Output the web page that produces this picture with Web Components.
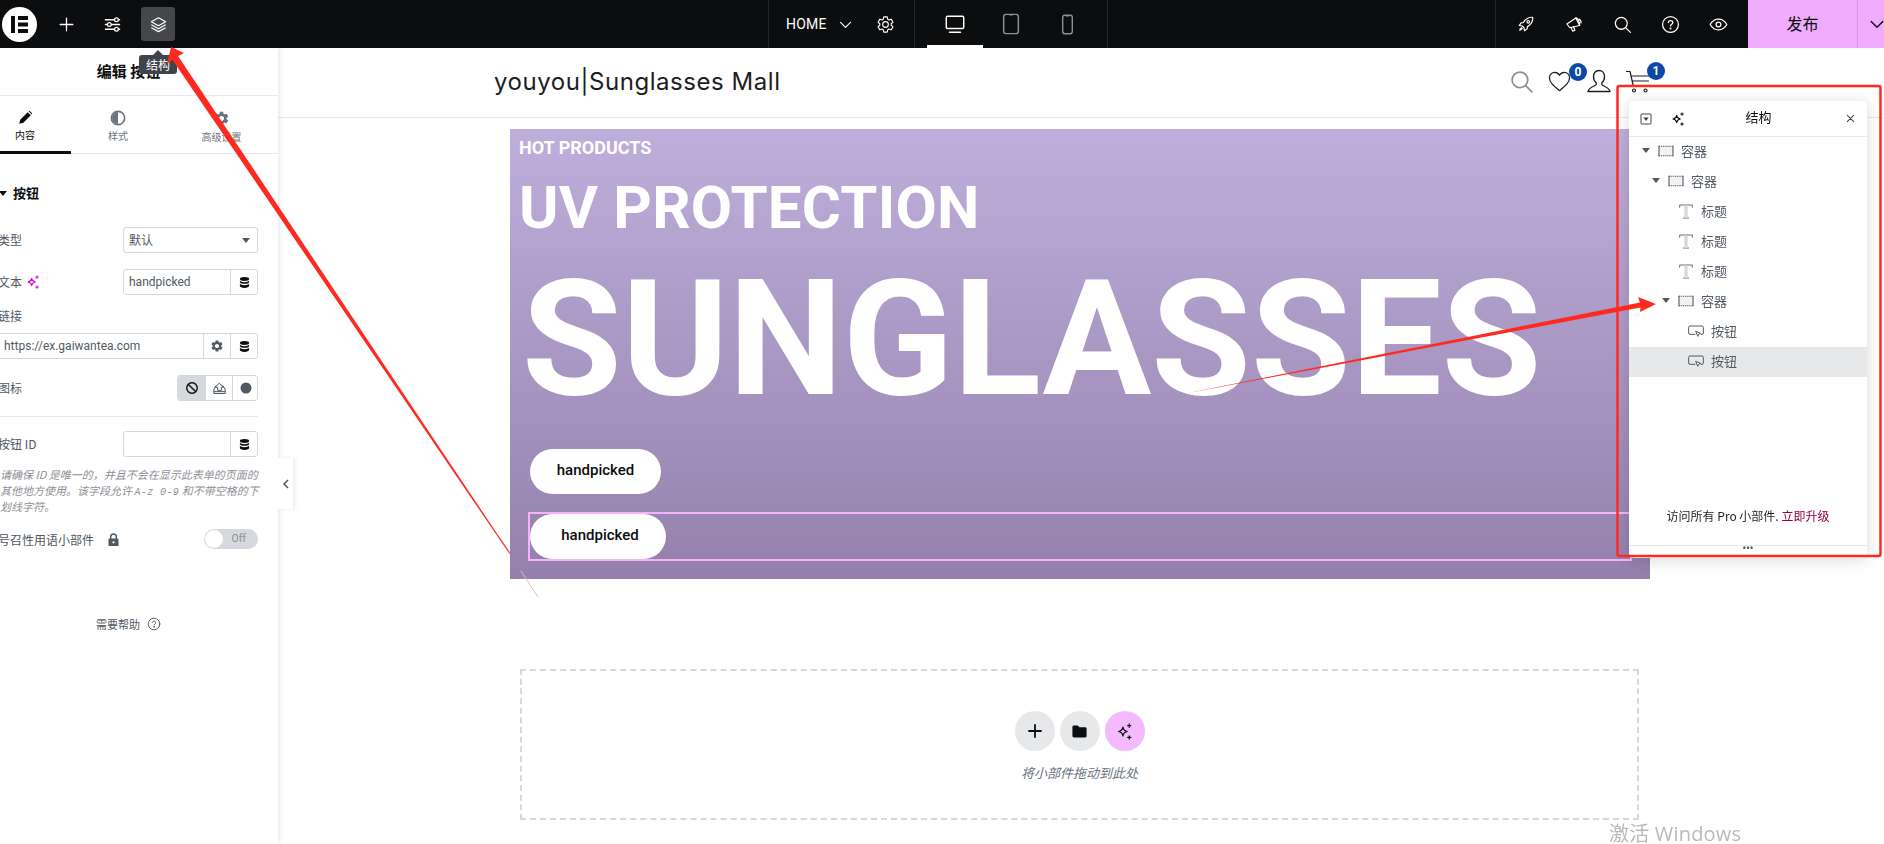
<!DOCTYPE html>
<html lang="zh">
<head>
<meta charset="utf-8">
<title>Editor</title>
<style>
    html, body { margin: 0; height: 100%; overflow: hidden; background: #fff; }
    body { font-family: Roboto, "Noto Sans CJK SC", sans-serif; }
    #app { display: flex; flex-direction: column; height: 844px; width: 1884px; }
    #main { display: flex; flex: 1; min-height: 0; }
</style>
</head>
<body>
<div id="app">
    <top-bar></top-bar>
    <div id="main">
        <side-panel>
            <ctrl-row label="类型" style="margin-top:24px"><ctrl-select value="默认"></ctrl-select></ctrl-row>
            <ctrl-row label="文本" sparkle style="margin-top:16px"><ctrl-input value="handpicked" width="135"></ctrl-input></ctrl-row>
            <ctrl-row label="链接" stacked style="margin-top:11px"><ctrl-input value="https://ex.gaiwantea.com" width="262" gear></ctrl-input></ctrl-row>
            <ctrl-row label="图标" style="margin-top:16px"><ctrl-choices></ctrl-choices></ctrl-row>
            <ctrl-row label="按钮 ID" divided style="margin-top:15px"><ctrl-input value="" width="135"></ctrl-input></ctrl-row>
        </side-panel>
        <site-canvas>
            <site-header></site-header>
            <hero-section>
                <pill-button>handpicked</pill-button>
                <pill-button selected>handpicked</pill-button>
            </hero-section>
            <drop-zone></drop-zone>
        </site-canvas>
    </div>
</div>
<structure-panel>
    <tree-row level="0" type="box" caret>容器</tree-row>
    <tree-row level="1" type="box" caret>容器</tree-row>
    <tree-row level="3" type="title">标题</tree-row>
    <tree-row level="3" type="title">标题</tree-row>
    <tree-row level="3" type="title">标题</tree-row>
    <tree-row level="2" type="box" caret>容器</tree-row>
    <tree-row level="4" type="button">按钮</tree-row>
    <tree-row level="4" type="button" active>按钮</tree-row>
</structure-panel>
<note-layer></note-layer>

<script>
const GEAR = 'M19.14 12.94c.04-.3.06-.61.06-.94 0-.32-.02-.64-.07-.94l2.03-1.58a.49.49 0 0 0 .12-.61l-1.92-3.32a.488.488 0 0 0-.59-.22l-2.39.96c-.5-.38-1.03-.7-1.62-.94l-.36-2.54a.484.484 0 0 0-.48-.41h-3.84c-.24 0-.43.17-.47.41l-.36 2.54c-.59.24-1.13.57-1.62.94l-2.39-.96c-.22-.08-.47 0-.59.22L2.74 8.87c-.12.21-.08.47.12.61l2.03 1.58c-.05.3-.09.63-.09.94s.02.64.07.94l-2.03 1.58a.49.49 0 0 0-.12.61l1.92 3.32c.12.22.37.29.59.22l2.39-.96c.5.38 1.03.7 1.62.94l.36 2.54c.05.24.24.41.48.41h3.84c.24 0 .44-.17.47-.41l.36-2.54c.59-.24 1.13-.56 1.62-.94l2.39.96c.22.08.47 0 .59-.22l1.92-3.32c.12-.22.07-.47-.12-.61l-2.01-1.58zM12 15.6c-1.98 0-3.6-1.62-3.6-3.6s1.62-3.6 3.6-3.6 3.6 1.62 3.6 3.6-1.62 3.6-3.6 3.6z';

const svg = (size, body, width = 1.6) =>
    `<svg width="${size}" height="${size}" viewBox="0 0 24 24" fill="none" stroke="currentColor" stroke-width="${width}" stroke-linecap="round" stroke-linejoin="round" style="display:block;flex:none">${body}</svg>`;

const ICONS = {
    plus: (s, w) => svg(s, '<path d="M12 4v16M4 12h16"/>', w),
    sliders: s => svg(s, '<path d="M3 6h11M20 6h1M3 12h2M11 12h10M3 18h11M20 18h1"/><circle cx="17" cy="6" r="2.4"/><circle cx="8" cy="12" r="2.4"/><circle cx="17" cy="18" r="2.4"/>'),
    layers: s => svg(s, '<path d="M12 3.5 21 8.5 12 13.5 3 8.500z"/><path d="M3.500 12.600 12 17.400 20.500 12.600"/><path d="M3.500 16.400 12 21 20.500 16.400"/>'),
    chevron: s => svg(s, '<path d="M5 9l7 7 7-7"/>'),
    gear: s => svg(s, `<path d="${GEAR}"/>`, 1.4),
    gearSolid: s => `<svg width="${s}" height="${s}" viewBox="0 0 24 24" style="display:block;flex:none" fill="currentColor"><path d="${GEAR}"/></svg>`,
    desktop: s => svg(s, '<rect x="2.500" y="3.500" width="19" height="13.500" rx="1.500"/><path d="M6 21h12"/>'),
    tablet: s => svg(s, '<rect x="4" y="1.500" width="16" height="21" rx="2.500"/><path d="M10.500 2h3"/>'),
    phone: s => svg(s, '<rect x="6.500" y="1.500" width="11" height="21" rx="2.500"/><path d="M10.500 2h3"/>'),
    rocket: s => svg(s, '<path d="M21 3c-5.500-.3-9.500 2-12.500 7l-3 .5L3 14l4 .7 2.300 2.300.7 4 3.500-2.500.5-3c5-3 7.300-7 7-12.500z"/><circle cx="15" cy="9" r="1.700"/><path d="M6 17c-1.400.6-2 1.700-2.300 3.300 1.600-.3 2.700-.9 3.300-2.300"/>'),
    megaphone: s => svg(s, '<path d="M2.500 12 14.500 4l5 10-13 3z"/><path d="M14.500 4c1.800-1 5.500 5.500 5 10"/><path d="M8 16.500l2.200 5 3-1.200-2-5"/><path d="M18.500 5.500c1.800.8 3 3 2.800 5"/>'),
    search: s => svg(s, '<circle cx="10.500" cy="10.500" r="7.500"/><path d="M16 16l6 6"/>'),
    help: s => svg(s, '<circle cx="12" cy="12" r="10"/><path d="M9.300 9.400c.2-1.500 1.300-2.400 2.800-2.400 1.600 0 2.800 1 2.800 2.400 0 2.300-2.900 2.300-2.900 4.600"/><circle cx="12" cy="17" r=".5"/>'),
    eye: s => svg(s, '<path d="M1.500 12C4 7.500 7.700 5.300 12 5.300s8 2.200 10.500 6.700C20 16.500 16.300 18.700 12 18.700S4 16.500 1.500 12z"/><circle cx="12" cy="12" r="3"/>'),
    sparkle: s => svg(s, '<path d="M10 6.500c.6 3.400 2.100 4.900 5.500 5.500-3.400.6-4.900 2.100-5.500 5.500-.6-3.400-2.100-4.900-5.500-5.500 3.400-.6 4.900-2.100 5.500-5.500z"/><path d="M18 2.500v4M16 4.500h4M18 17.500v4M16 19.500h4"/>'),
    db: s => `<svg width="${s}" height="${s}" viewBox="0 0 24 24" style="display:block" fill="currentColor"><ellipse cx="12" cy="5.500" rx="8.500" ry="3.500"/><path d="M3.500 8.500c1 2 4.500 3 8.500 3s7.500-1 8.500-3v3c-1 2-4.500 3-8.500 3s-7.500-1-8.500-3z"/><path d="M3.500 14c1 2 4.500 3 8.500 3s7.500-1 8.500-3v4.500c0 2-3.800 3.500-8.500 3.500s-8.500-1.500-8.500-3.500z"/></svg>`,
    block: s => svg(s, '<circle cx="12" cy="12" r="9"/><path d="M5.800 5.800l12.400 12.400"/>', 2.4),
    upload: s => svg(s, '<path d="M12 4l6.500 6H15v5H9v-5H5.500z"/><path d="M6.500 7.500 3 13v7h18v-7l-3.500-5.500"/><path d="M3 17h18"/>'),
    dot: s => `<svg width="${s}" height="${s}" viewBox="0 0 24 24" style="display:block"><circle cx="12" cy="12" r="11" fill="currentColor"/></svg>`,
    pencil: s => `<svg width="${s}" height="${s}" viewBox="0 0 24 24" style="display:block;flex:none" fill="currentColor"><path d="M2 22l1.500-6.500L15.500 3.500l5 5L8.500 20.500z"/><path d="M17 2l1.500-.8 4.300 4.300L22 7z"/></svg>`,
    half: s => `<svg width="${s}" height="${s}" viewBox="0 0 24 24" style="display:block;flex:none"><circle cx="12" cy="12" r="10" fill="none" stroke="currentColor" stroke-width="2.400"/><path d="M12 3a9 9 0 0 0 0 18z" fill="currentColor"/></svg>`,
    lock: s => `<svg width="${s}" height="${s}" viewBox="0 0 24 24" style="display:block"><path d="M7.500 11V7.500a4.500 4.500 0 0 1 9 0V11" fill="none" stroke="currentColor" stroke-width="2.400"/><rect x="4" y="10.500" width="16" height="12" rx="1.500" fill="currentColor"/><circle cx="12" cy="16.500" r="1.800" fill="#fff"/></svg>`,
    heart: s => svg(s, '<path d="M12 21.500C6 16.500 1.500 13 1.500 8 1.500 4.800 4 2.500 7 2.500c2.200 0 4 1.200 5 3 1-1.800 2.800-3 5-3 3 0 5.500 2.300 5.500 5.500 0 5-4.500 8.500-10.500 13.500z"/>', 1.3),
    user: s => svg(s, '<path d="M12 1.500c-3.500 0-5.500 2.700-5.500 6 0 2.800 1 5 2.700 6.300v1.700c0 1.300-7.700 2.500-8.200 7h22c-.5-4.500-8.200-5.700-8.200-7v-1.700c1.700-1.300 2.700-3.500 2.700-6.300 0-3.300-2-6-5.500-6z"/>', 1.3),
    cart: s => svg(s, '<path d="M.500 2.500h3.500l3.500 15h15M5 7h18M6 12h16.500"/><circle cx="8" cy="21.500" r="1.500"/><circle cx="19.500" cy="21.500" r="1.500"/>', 1.2),
    folder: s => `<svg width="${s}" height="${s}" viewBox="0 0 24 24" style="display:block" fill="currentColor"><path d="M2 5.500C2 4.400 2.900 3.500 4 3.500h5.500l2.500 2.500h8c1.100 0 2 .9 2 2v10.500c0 1.100-.9 2-2 2H4c-1.100 0-2-.9-2-2z"/></svg>`,
    close: s => svg(s, '<path d="M5 5l14 14M19 5 5 19"/>', 2.2),
    collapse: s => `<svg width="${s}" height="${s}" viewBox="0 0 24 24" style="display:block"><rect x="2" y="2" width="20" height="20" rx="1.500" fill="none" stroke="currentColor" stroke-width="2"/><path d="M6.500 9h11L12 16z" fill="currentColor"/></svg>`,
    box: s => `<svg width="${s}" height="${s}" viewBox="0 0 24 24" style="display:block"><rect x="1" y="5" width="22" height="14" fill="#f1f2f3"/><path d="M1 5h22M1 19h22" stroke="#515962" stroke-width="1.600" stroke-dasharray="2 1.200"/><path d="M1.500 4v16M22.500 4v16" stroke="#515962" stroke-width="1.600"/></svg>`,
    title: s => `<svg width="${s}" height="${s}" viewBox="0 0 24 24" style="display:block" fill="none" stroke="#515962" stroke-width="1.300"><path d="M2.500 7V3h19v4"/><path d="M7.500 22.500h9"/><path d="M9.500 3.500h5v19h-5z" fill="#d5d8dc" stroke="none"/></svg>`,
    widgetBtn: s => `<svg width="${s}" height="${s}" viewBox="0 0 24 24" style="display:block" fill="none" stroke="currentColor" stroke-width="1.500"><path d="M11 17H3a2 2 0 0 1-2-2V6.500a2 2 0 0 1 2-2h18a2 2 0 0 1 2 2V15a2 2 0 0 1-2 2h-2"/><path d="M11.500 12.500l7.500 3-3 1.300-1.300 3.200z" fill="#fff"/></svg>`
};

class TopBar extends HTMLElement {
    connectedCallback() {
        this.attachShadow({ mode: 'open' });
        this.shadowRoot.innerHTML = `
        <style>
            :host { display: flex; height: 48px; background: #0c0d0e; color: #fff; flex: none; position: relative; z-index: 5; }
            .logo { width: 35px; height: 35px; margin: 7px 0 0 2px; border-radius: 50%; background: #fff; display: flex; align-items: center; justify-content: center; }
            .btn { width: 34px; height: 34px; margin: 7px 0 0 12px; display: flex; align-items: center; justify-content: center; border-radius: 3px; }
            .btn.on { background: #45474a; }
            .left { display: flex; width: 768px; flex: none; }
            .page { width: 147px; flex: none; box-sizing: border-box; display: flex; align-items: center; border-left: 1px solid #26282b; border-right: 1px solid #26282b; }
            .page b { font: 400 14px Roboto, sans-serif; letter-spacing: .2px; margin-left: 17px; }
            .devices { width: 193px; flex: none; box-sizing: border-box; display: flex; border-right: 1px solid #26282b; }
            .dev { width: 56px; display: flex; align-items: center; justify-content: center; color: #8d9096; height: 48px; box-sizing: border-box; }
            .dev.on { color: #fff; border-bottom: 3px solid #fff; padding-top: 3px; }
            .mid { flex: 1; border-right: 1px solid #26282b; }
            .tools { width: 252px; flex: none; display: flex; align-items: center; box-sizing: border-box; padding-left: 6px; }
            .t { width: 48px; display: flex; justify-content: center; }
            .publish { width: 109px; flex: none; box-sizing: border-box; padding-bottom: 3px; background: #f0abfc; color: #0c0d0e; display: flex; align-items: center; justify-content: center; font: 16px "Noto Sans CJK SC", sans-serif; }
            .more { width: 27px; flex: none; box-sizing: border-box; background: #f0abfc; border-left: 1px solid #dd94e8; color: #0c0d0e; display: flex; align-items: center; padding-left: 9px; overflow: hidden; }
            .tip { position: absolute; left: 139px; top: 55px; width: 38px; height: 19px; background: #3f444b; color: #fff; border-radius: 3px; font: 12px/19px "Noto Sans CJK SC", sans-serif; text-align: center; }
            .tip::before { content: ""; position: absolute; left: 14px; top: -5px; border: 5px solid transparent; border-top: 0; border-bottom-color: #3f444b; }
        </style>
        <div class="left">
            <div class="logo"><svg width="19" height="19" viewBox="0 0 19 19"><path fill="#0c0d0e" d="M1 1h4v17H1zM8 1h10v4H8zM8 7.500h10v4H8zM8 14h10v4H8z"/></svg></div>
            <div class="btn">${ICONS.plus(19)}</div>
            <div class="btn">${ICONS.sliders(19)}</div>
            <div class="btn on">${ICONS.layers(19)}</div>
        </div>
        <div class="page"><b>HOME</b><span style="margin-left:10px">${ICONS.chevron(17)}</span><span style="margin-left:22px">${ICONS.gear(19)}</span></div>
        <div class="devices">
            <div class="dev on" style="margin-left:12px">${ICONS.desktop(22)}</div>
            <div class="dev">${ICONS.tablet(22)}</div>
            <div class="dev">${ICONS.phone(21)}</div>
        </div>
        <div class="mid"></div>
        <div class="tools">
            <span class="t">${ICONS.rocket(18)}</span><span class="t">${ICONS.megaphone(18)}</span><span class="t">${ICONS.search(19)}</span><span class="t">${ICONS.help(19)}</span><span class="t">${ICONS.eye(19)}</span>
        </div>
        <div class="publish">发布</div>
        <div class="more">${ICONS.chevron(20)}</div>
        <div class="tip">结构</div>`;
    }
}

class SidePanel extends HTMLElement {
    connectedCallback() {
        this.attachShadow({ mode: 'open' });
        this.shadowRoot.innerHTML = `
        <style>
            :host { display: block; width: 278px; flex: none; background: #fff; box-shadow: 1px 0 5px rgba(0,0,0,.12); position: relative; z-index: 2; font-family: "Noto Sans CJK SC", sans-serif; }
            .head { height: 47px; border-bottom: 1px solid #e6e8ea; text-align: center; font: 700 15px/45px "Noto Sans CJK SC", sans-serif; color: #0c0d0e; padding-right: 21px; }
            .tabs { display: flex; height: 57px; border-bottom: 1px solid #e6e8ea; margin-left: -21px; font-size: 10px; color: #69727d; }
            .tab { display: flex; flex-direction: column; align-items: center; padding-top: 14px; box-sizing: border-box; gap: 2px; line-height: 16px; }
            .tab.on { color: #0c0d0e; box-shadow: inset 0 -3px 0 #0c0d0e; height: 58px; }
            .body { margin-left: -4px; width: 262px; }
            .sec { display: flex; align-items: center; font: 700 13px/20px "Noto Sans CJK SC", sans-serif; color: #0c0d0e; margin-top: 29px; }
            .sec i { width: 0; height: 0; border: 4px solid transparent; border-top: 5px solid #0c0d0e; border-bottom: 0; margin: 0 6px 0 3px; }
            .note { font: italic 11px/16px "Noto Sans CJK SC", sans-serif; color: #8d9096; margin: 9px 0 0 4px; white-space: nowrap; }
            .note code { font: italic 10px "Liberation Mono", monospace; letter-spacing: .4px; }
            .cta { display: flex; align-items: center; height: 20px; margin-top: 15px; font-size: 12px; color: #515962; padding-left: 2px; }
            .cta .lock { margin-left: 12px; color: #515962; }
            .tog { margin-left: auto; width: 54px; height: 20px; border-radius: 10px; background: #d5d8dc; position: relative; font: 10.500px/19px Roboto, sans-serif; color: #8d9096; text-align: right; padding-right: 12px; box-sizing: border-box; }
            .tog::before { content: ""; position: absolute; left: 1px; top: 1px; width: 18px; height: 18px; border-radius: 50%; background: #fff; }
            .help { display: flex; justify-content: center; align-items: center; gap: 7px; font-size: 11px; color: #515962; margin: 65px 0 0 3px; height: 20px; }
            .handle { position: absolute; left: 278px; top: 410px; width: 15px; height: 51px; background: #fff; box-shadow: 2px 0 4px rgba(0,0,0,.08); display: flex; align-items: center; justify-content: center; color: #515962; }
        </style>
        <div class="head">编辑 按钮</div>
        <div class="tabs">
            <div class="tab on" style="width:92px">${ICONS.pencil(15)}内容</div>
            <div class="tab" style="width:94px">${ICONS.half(16)}样式</div>
            <div class="tab" style="width:113px">${ICONS.gearSolid(17)}高级设置</div>
        </div>
        <div class="body">
            <div class="sec"><i></i>按钮</div>
            <slot></slot>
            <div class="note">请确保 ID 是唯一的，并且不会在显示此表单的页面的<br>其他地方使用。该字段允许 <code>A-z 0-9</code> 和不带空格的下<br>划线字符。</div>
            <div class="cta">号召性用语小部件<span class="lock">${ICONS.lock(15)}</span><span class="tog">Off</span></div>
            <div class="help">需要帮助 ${ICONS.help(14)}</div>
        </div>
        <div class="handle"><svg width="8" height="10" viewBox="0 0 8 10" fill="none" stroke="currentColor" stroke-width="1.600"><path d="M6 1 2 5l4 4"/></svg></div>`;
    }
}

class CtrlRow extends HTMLElement {
    connectedCallback() {
        const stacked = this.hasAttribute('stacked');
        const label = this.getAttribute('label');
        this.attachShadow({ mode: 'open' });
        this.shadowRoot.innerHTML = `
        <style>
            :host { display: block; font: 12px "Noto Sans CJK SC", Roboto, sans-serif; color: #515962; }
            .row { display: flex; align-items: ${stacked ? 'flex-start' : 'center'}; flex-direction: ${stacked ? 'column' : 'row'}; justify-content: space-between; gap: ${stacked ? '7px' : '0'}; }
            .lbl { display: flex; align-items: center; gap: 3px; line-height: 20px; padding-left: 2px; }
            .spark { color: #d004d4; }
            hr { border: 0; border-top: 1px solid #e6e8ea; margin: 0 0 14px; }
        </style>
        ${this.hasAttribute('divided') ? '<hr>' : ''}
        <div class="row">
            <span class="lbl">${label}${this.hasAttribute('sparkle') ? `<span class="spark">${ICONS.sparkle(16)}</span>` : ''}</span>
            <slot></slot>
        </div>`;
    }
}

const FIELD_CSS = `
    :host { display: flex; height: 26px; box-sizing: border-box; border: 1px solid #d5d8dc; border-radius: 3px; background: #fff; font: 12px/24px Roboto, sans-serif; color: #515962; overflow: hidden; }
    .val { flex: 1; padding-left: 5px; white-space: nowrap; }
    .cell { width: 27px; display: flex; align-items: center; justify-content: center; border-left: 1px solid #d5d8dc; color: #0c0d0e; flex: none; box-sizing: border-box; }
`;

class CtrlSelect extends HTMLElement {
    connectedCallback() {
        this.attachShadow({ mode: 'open' });
        this.shadowRoot.innerHTML = `
        <style>${FIELD_CSS}
            :host { width: 135px; font-family: "Noto Sans CJK SC", sans-serif; }
            i { width: 0; height: 0; border: 4px solid transparent; border-top: 5px solid #515962; border-bottom: 0; align-self: center; margin-right: 7px; }
        </style>
        <span class="val">${this.getAttribute('value')}</span><i></i>`;
    }
}

class CtrlInput extends HTMLElement {
    connectedCallback() {
        this.attachShadow({ mode: 'open' });
        this.shadowRoot.innerHTML = `
        <style>${FIELD_CSS}
            :host { width: ${this.getAttribute('width')}px; }
            :host([gear]) .val { padding-left: 7px; }
        </style>
        <span class="val">${this.getAttribute('value')}</span>
        ${this.hasAttribute('gear') ? `<span class="cell" style="color:#515962">${ICONS.gearSolid(14)}</span>` : ''}
        <span class="cell">${ICONS.db(13)}</span>`;
    }
}

class CtrlChoices extends HTMLElement {
    connectedCallback() {
        this.attachShadow({ mode: 'open' });
        this.shadowRoot.innerHTML = `
        <style>${FIELD_CSS}
            :host { width: 81px; }
            .cell { color: #515962; }
            .cell.on { border-left: 0; background: #d5d8dc; color: #0c0d0e; }
        </style>
        <span class="cell on">${ICONS.block(14)}</span>
        <span class="cell">${ICONS.upload(15)}</span>
        <span class="cell">${ICONS.dot(12)}</span>`;
    }
}

class SiteCanvas extends HTMLElement {
    connectedCallback() {
        this.attachShadow({ mode: 'open' });
        this.shadowRoot.innerHTML = `
        <style>:host { display: block; flex: 1; min-width: 0; background: #fff; }</style>
        <slot></slot>`;
    }
}

class SiteHeader extends HTMLElement {
    connectedCallback() {
        this.attachShadow({ mode: 'open' });
        this.shadowRoot.innerHTML = `
        <style>
            :host { display: flex; align-items: center; height: 70px; box-sizing: border-box; border-bottom: 1px solid #e6e8ea; padding-left: 216px; color: #1d1d1f; }
            .name { font: 400 24px Inter, sans-serif; letter-spacing: .55px; margin-top: -2px; }
            .icons { display: flex; align-items: center; margin-left: auto; margin-right: 234px; margin-top: -3px; }
            .ic { position: relative; display: block; }
            .badge { position: absolute; width: 18px; height: 18px; border-radius: 50%; background: #0d47a8; color: #fff; font: 700 12px/18px Roboto, sans-serif; text-align: center; top: -7px; }
        </style>
        <span class="name">youyou|Sunglasses Mall</span>
        <div class="icons">
            <span class="ic" style="color:#8d8d8d;margin-right:14px">${ICONS.search(25)}</span>
            <span class="ic" style="margin-right:16px">${ICONS.heart(23)}<span class="badge" style="left:21px">0</span></span>
            <span class="ic" style="margin-right:15px">${ICONS.user(24)}</span>
            <span class="ic">${ICONS.cart(24)}<span class="badge" style="left:21px">1</span></span>
        </div>`;
    }
}

class HeroSection extends HTMLElement {
    connectedCallback() {
        this.attachShadow({ mode: 'open' });
        this.shadowRoot.innerHTML = `
        <style>
            :host { display: block; margin: 11px 0 0 232px; width: 1140px; height: 450px; box-sizing: border-box; padding: 8px 9px 0; background: linear-gradient(#bfaedb, #9480ab); color: #fff; font-family: Roboto, sans-serif; }
            .hot { font: 700 18px/22px Roboto, sans-serif; }
            .uv { font: 700 60px/70px Roboto, sans-serif; margin-top: 14px; letter-spacing: .2px; }
            .big { font: 700 162px/170px Roboto, sans-serif; margin: 11px 0 0 3px; white-space: nowrap; }
            .btns { display: flex; flex-direction: column; margin-top: 25px; }
        </style>
        <div class="hot">HOT PRODUCTS</div>
        <div class="uv">UV PROTECTION</div>
        <div class="big">SUNGLASSES</div>
        <div class="btns"><slot></slot></div>`;
    }
}

class PillButton extends HTMLElement {
    connectedCallback() {
        const selected = this.hasAttribute('selected');
        this.attachShadow({ mode: 'open' });
        this.shadowRoot.innerHTML = `
        <style>
            :host { display: block; margin: ${selected ? '18px 0 0 9px' : '0 0 0 11px'}; ${selected ? 'width: 1104px; height: 49px; box-sizing: border-box; border: 2px solid #f3b4fb; ' : ''} }
            a { display: block; box-sizing: border-box; width: ${selected ? 136 : 131}px; padding-left: ${selected ? 4 : 0}px; height: 45px; border-radius: 23px; background: #fff; color: #0c0d0e; text-align: center; font: 500 15px/43px Roboto, sans-serif; }
        </style>
        <a><slot></slot></a>`;
    }
}

class DropZone extends HTMLElement {
    connectedCallback() {
        this.attachShadow({ mode: 'open' });
        this.shadowRoot.innerHTML = `
        <style>
            :host { display: flex; flex-direction: column; align-items: center; margin: 90px 0 0 242px; width: 1119px; height: 151px; box-sizing: border-box; border: 2px dashed #d5d8dc; padding-top: 40px; }
            .row { display: flex; gap: 5px; }
            .c { width: 40px; height: 40px; border-radius: 50%; background: #e6e8ea; color: #0c0d0e; display: flex; align-items: center; justify-content: center; }
            .c.ai { background: #f3bafd; }
            p { margin: 12px 0 0; font: italic 13px/20px "Noto Sans CJK SC", sans-serif; color: #69727d; }
        </style>
        <div class="row">
            <div class="c">${ICONS.plus(18, 2.4)}</div>
            <div class="c">${ICONS.folder(17)}</div>
            <div class="c ai">${ICONS.sparkle(19)}</div>
        </div>
        <p>将小部件拖动到此处</p>`;
    }
}

class StructurePanel extends HTMLElement {
    connectedCallback() {
        this.attachShadow({ mode: 'open' });
        this.shadowRoot.innerHTML = `
        <style>
            :host { position: fixed; left: 1629px; top: 101px; width: 238px; height: 457px; background: #fff; border-radius: 5px; box-shadow: 0 2px 15px rgba(0,0,0,.15); display: flex; flex-direction: column; z-index: 6; font-family: "Noto Sans CJK SC", sans-serif; }
            .head { display: flex; align-items: center; height: 35px; flex: none; border-bottom: 1px solid #e6e8ea; color: #3f444b; font-size: 13px; position: relative; }
            .head .title { position: absolute; left: 0; right: 0; text-align: center; color: #0c0d0e; padding-left: 21px; box-sizing: border-box; top: 6px; line-height: 20px; }
            .list { flex: 1; }
            .foot { height: 44px; flex: none; text-align: center; font-size: 12px; line-height: 30px; color: #1f2124; box-sizing: border-box; position: relative; }
            .foot em { font-style: normal; color: #93003f; }
            .grip { height: 13px; flex: none; border-top: 1px solid #e6e8ea; text-align: center; font: 700 10px/6px Roboto, sans-serif; color: #515962; box-sizing: border-box; }
        </style>
        <div class="head">
            <span style="margin-left:11px">${ICONS.collapse(12)}</span>
            <span style="margin-left:18px;color:#0c0d0e">${ICONS.sparkle(16)}</span>
            <span class="title">结构</span>
            <span style="margin-left:auto;margin-right:11px">${ICONS.close(11)}</span>
        </div>
        <div class="list"><slot></slot></div>
        <div class="foot">访问所有 Pro 小部件. <em>立即升级</em></div>
        <div class="grip">•••</div>`;
    }
}

class TreeRow extends HTMLElement {
    connectedCallback() {
        const level = +this.getAttribute('level');
        const type = this.getAttribute('type');
        const caret = this.hasAttribute('caret');
        this.attachShadow({ mode: 'open' });
        this.shadowRoot.innerHTML = `
        <style>
            :host { display: flex; align-items: center; height: 30px; box-sizing: border-box; padding-bottom: 3px; color: #515962; font-size: 13px; padding-left: ${(caret ? 13 : 19) + level * 10}px; ${this.hasAttribute('active') ? 'background: #e6e8ea;' : ''} }
            i { width: 0; height: 0; border: 4px solid transparent; border-top: 5px solid #515962; border-bottom: 0; margin-right: 8px; flex: none; }
            .ic { width: 16px; margin-right: 7px; flex: none; }
        </style>
        ${caret ? '<i></i>' : ''}
        <span class="ic">${ICONS[type === 'button' ? 'widgetBtn' : type](16)}</span>
        <slot></slot>`;
    }
}

class NoteLayer extends HTMLElement {
    connectedCallback() {
        this.attachShadow({ mode: 'open' });
        this.shadowRoot.innerHTML = `
        <style>
            :host { position: fixed; left: 0; top: 0; width: 1884px; height: 844px; pointer-events: none; z-index: 10; }
            svg { position: absolute; left: 0; top: 0; }
            .mark { position: absolute; left: 1609px; top: 823px; font: 20px "Open Sans", "Noto Sans CJK SC", sans-serif; color: #b9b9b9; line-height: 21px; white-space: nowrap; letter-spacing: .2px; }
        </style>
        <svg width="1884" height="844" viewBox="0 0 1884 844">
            <rect x="1617.500" y="86" width="263" height="470" rx="2" fill="none" stroke="#ff2a1f" stroke-width="2.500"/>
            <path fill="#ff2a1f" d="M171 47 184 53 178 56 510 553 509.500 554 172.500 60 167 64z"/>
            <path d="M500 538 510 553" stroke="#e56a60" stroke-width="1"/>
            <path d="M521 571 538 597" stroke="#f2b5ae" stroke-width="1"/>
            <path fill="#ff2a1f" d="M1656 304 1640 312 1640.500 307.500 1183 394 1640 302.500 1638 297z"/>
        </svg>
        <span class="mark">激活 Windows</span>`;
    }
}

customElements.define('top-bar', TopBar);
customElements.define('side-panel', SidePanel);
customElements.define('ctrl-row', CtrlRow);
customElements.define('ctrl-select', CtrlSelect);
customElements.define('ctrl-input', CtrlInput);
customElements.define('ctrl-choices', CtrlChoices);
customElements.define('site-canvas', SiteCanvas);
customElements.define('site-header', SiteHeader);
customElements.define('hero-section', HeroSection);
customElements.define('pill-button', PillButton);
customElements.define('drop-zone', DropZone);
customElements.define('structure-panel', StructurePanel);
customElements.define('tree-row', TreeRow);
customElements.define('note-layer', NoteLayer);
</script>
</body>
</html>
